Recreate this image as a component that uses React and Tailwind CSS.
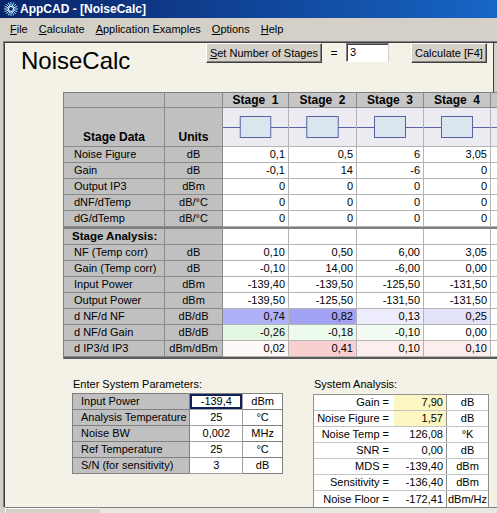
import React from "react";

const WC = ["w-[101px]", "w-[58px]", "w-[66px]", "w-[68px]", "w-[67px]", "w-[67px]", "w-[60px]"];

function StageIcon() {
  return (
    <svg width="100%" height="100%" viewBox="0 0 66 38" preserveAspectRatio="none">
      <line x1="0" y1="19.5" x2="66" y2="19.5" stroke="#5a62a4" strokeWidth="1" />
      <rect x="17.5" y="8.5" width="31" height="21" fill="#dae6ee" stroke="#5a62a4" strokeWidth="1" />
    </svg>
  );
}

function AppIcon() {
  const rays = [0, 22.5, 45, 67.5, 90, 112.5, 135, 157.5];
  return (
    <svg width="16" height="16" viewBox="0 0 16 16">
      {rays.map((a) => {
        const r = (a * Math.PI) / 180;
        const dx = Math.cos(r) * 7;
        const dy = Math.sin(r) * 7;
        return (
          <line key={a} x1={8 - dx} y1={8 - dy} x2={8 + dx} y2={8 + dy} stroke="#9fe4ff" strokeWidth="1" />
        );
      })}
      <circle cx="8" cy="8" r="2.5" fill="#0a246a" stroke="#ffffff" strokeWidth="1" />
    </svg>
  );
}

function Btn({ className, children }) {
  return (
    <div
      className={`${className} h-[20px] flex items-center justify-center bg-[#d4d0c8] border border-t-white border-l-white border-r-[#404040] border-b-[#404040] shadow-[inset_-1px_-1px_0_#808080] text-[11px] text-black`}
    >
      {children}
    </div>
  );
}

const stageData = [
  ["Noise Figure", "dB", ["0,1", "0,5", "6", "3,05"]],
  ["Gain", "dB", ["-0,1", "14", "-6", "0"]],
  ["Output IP3", "dBm", ["0", "0", "0", "0"]],
  ["dNF/dTemp", "dB/°C", ["0", "0", "0", "0"]],
  ["dG/dTemp", "dB/°C", ["0", "0", "0", "0"]],
];

const analysis = [
  ["NF (Temp corr)", "dB", ["0,10", "0,50", "6,00", "3,05"], null],
  ["Gain (Temp corr)", "dB", ["-0,10", "14,00", "-6,00", "0,00"], null],
  ["Input Power", "dBm", ["-139,40", "-139,50", "-125,50", "-131,50"], null],
  ["Output Power", "dBm", ["-139,50", "-125,50", "-131,50", "-131,50"], null],
  ["d NF/d NF", "dB/dB", ["0,74", "0,82", "0,13", "0,25"], ["bg-[#b0b0f6]", "bg-[#a2a2f2]", "bg-[#ececfc]", "bg-[#e2e2f9]"]],
  ["d NF/d Gain", "dB/dB", ["-0,26", "-0,18", "-0,10", "0,00"], ["bg-[#e4f7e4]", "bg-[#ecfaec]", "bg-[#f3fcf3]", "bg-white"]],
  ["d IP3/d IP3", "dBm/dBm", ["0,02", "0,41", "0,10", "0,10"], ["bg-[#fef8f8]", "bg-[#f8d0d0]", "bg-[#fdeeee]", "bg-[#fdeeee]"]],
];

function LabelCell({ children, bold }) {
  return (
    <div
      className={`${WC[0]} h-full shrink-0 bg-[#c0c0c0] border-r border-b border-[#8a8a8a] flex items-center ${
        bold ? "pl-[8px] font-bold text-[11.5px]" : "pl-[10px] text-[11px]"
      } whitespace-nowrap`}
    >
      {children}
    </div>
  );
}

function UnitCell({ children }) {
  return (
    <div className={`${WC[1]} h-full shrink-0 bg-[#c0c0c0] border-r border-b border-[#8a8a8a] flex items-center justify-center text-[11px]`}>
      {children}
    </div>
  );
}

function ValCell({ i, children, bg }) {
  return (
    <div
      className={`${WC[i + 2]} h-full shrink-0 ${bg || "bg-white"} border-r border-b border-[#b4b4b4] flex items-center justify-end pr-[3px] text-[11px]`}
    >
      {children}
    </div>
  );
}

function MainTable() {
  return (
    <div className="ml-[58px] mt-0 w-[600px] border-t border-l border-[#808080] leading-[15px]">
      {/* header */}
      <div className="flex h-[15px]">
        <div className={`${WC[0]} h-full shrink-0 bg-[#c0c0c0] border-r border-b border-[#8a8a8a]`} />
        <div className={`${WC[1]} h-full shrink-0 bg-[#c0c0c0] border-r border-b border-[#8a8a8a]`} />
        {[1, 2, 3, 4].map((n, i) => (
          <div
            key={n}
            className={`${WC[i + 2]} h-full shrink-0 bg-[#c6c6c6] border-r border-b border-[#8a8a8a] flex items-center justify-center font-bold text-[12px] whitespace-pre`}
          >
            {"Stage  " + n}
          </div>
        ))}
        <div className={`${WC[6]} h-full shrink-0 bg-[#c6c6c6] border-r border-b border-[#8a8a8a]`} />
      </div>
      {/* icons */}
      <div className="flex h-[39px]">
        <div className={`${WC[0]} h-full shrink-0 bg-[#c0c0c0] border-r border-b border-[#8a8a8a] flex items-end justify-center pb-[1px] font-bold text-[12px]`}>
          Stage Data
        </div>
        <div className={`${WC[1]} h-full shrink-0 bg-[#c0c0c0] border-r border-b border-[#8a8a8a] flex items-end justify-center pb-[1px] font-bold text-[12px]`}>
          Units
        </div>
        {[0, 1, 2, 3, 4].map((i) => (
          <div key={i} className={`${WC[i + 2]} h-full shrink-0 bg-[#ecebf1] border-r border-b border-[#b4b4b4]`}>
            <StageIcon />
          </div>
        ))}
      </div>
      {stageData.map(([l, u, v]) => (
        <div key={l} className="flex h-[16px]">
          <LabelCell>{l}</LabelCell>
          <UnitCell>{u}</UnitCell>
          {v.map((x, i) => (
            <ValCell key={i} i={i}>
              {x}
            </ValCell>
          ))}
          <ValCell i={4}></ValCell>
        </div>
      ))}
      <div className="h-[2px] bg-[#808080]" />
      <div className="flex h-[16px]">
        <LabelCell bold>Stage Analysis:</LabelCell>
        <UnitCell></UnitCell>
        {[0, 1, 2, 3, 4].map((i) => (
          <ValCell key={i} i={i}></ValCell>
        ))}
      </div>
      {analysis.map(([l, u, v, c]) => (
        <div key={l} className="flex h-[16px]">
          <LabelCell>{l}</LabelCell>
          <UnitCell>{u}</UnitCell>
          {v.map((x, i) => (
            <ValCell key={i} i={i} bg={c ? c[i] : null}>
              {x}
            </ValCell>
          ))}
          <ValCell i={4}></ValCell>
        </div>
      ))}
      <div className="h-[2px] bg-[#5a5a5a]" />
    </div>
  );
}

const params = [
  ["Input Power", "-139,4", "dBm"],
  ["Analysis Temperature", "25", "°C"],
  ["Noise BW", "0,002", "MHz"],
  ["Ref Temperature", "25", "°C"],
  ["S/N (for sensitivity)", "3", "dB"],
];

const sysAnalysis = [
  ["Gain =", "7,90", "dB", true],
  ["Noise Figure =", "1,57", "dB", true],
  ["Noise Temp =", "126,08", "°K", false],
  ["SNR =", "0,00", "dB", false],
  ["MDS =", "-139,40", "dBm", false],
  ["Sensitivity =", "-136,40", "dBm", false],
  ["Noise Floor =", "-172,41", "dBm/Hz", false],
];

function ParamsPanel() {
  return (
    <div className="ml-[67px] w-[211px] shrink-0">
      <div className="h-[14px] leading-[14px] text-[11px] pl-[1px]">Enter System Parameters:</div>
      <div className="mt-[2px] border-t border-l border-[#808080] leading-[15px]">
        {params.map(([l, v, u], r) => (
          <div key={l} className="flex h-[16px]">
            <div className="w-[118px] h-full bg-[#c0c0c0] border-r border-b border-[#808080] pl-[8px] flex items-center text-[11px] whitespace-nowrap">
              {l}
            </div>
            <div
              className={`w-[53px] h-full bg-white border-r border-b border-[#a0a0a0] flex items-center justify-center text-[11px] ${
                r === 0 ? "shadow-[inset_0_0_0_2px_#12205a]" : ""
              }`}
            >
              {v}
            </div>
            <div className="w-[40px] h-full bg-white border-r border-b border-[#808080] flex items-center justify-center text-[11px]">
              {u}
            </div>
          </div>
        ))}
      </div>
    </div>
  );
}

function AnalysisPanel() {
  return (
    <div className="ml-[30px] w-[176px] shrink-0">
      <div className="h-[14px] leading-[14px] text-[11px] pl-[1px]">System Analysis:</div>
      <div className="mt-[3px] border border-[#909090] leading-[15px]">
        {sysAnalysis.map(([l, v, u, y], r) => (
          <div key={l} className={`flex h-[16px] ${r < sysAnalysis.length - 1 ? "border-b border-[#c4c4c4]" : ""}`}>
            <div className="w-[80px] h-full bg-white pr-[5px] flex items-center justify-end text-[11px] whitespace-nowrap">{l}</div>
            <div
              className={`w-[53px] h-full ${y ? "bg-[#fcf6c2]" : "bg-white"} border-r border-[#909090] pr-[3px] flex items-center justify-end text-[11px]`}
            >
              {v}
            </div>
            <div className="w-[41px] h-full bg-white flex items-center justify-center text-[11px] whitespace-nowrap">{u}</div>
          </div>
        ))}
      </div>
    </div>
  );
}

export default function App() {
  const menu = [
    ["F", "ile"],
    ["C", "alculate"],
    ["A", "pplication Examples"],
    ["O", "ptions"],
    ["H", "elp"],
  ];
  return (
    <div className="w-[497px] h-[513px] overflow-hidden bg-[#d4d0c8] flex flex-col font-['Liberation_Sans',Arial,sans-serif] text-black">
      {/* title bar */}
      <div className="h-[18px] shrink-0 flex items-center bg-gradient-to-r from-[#0a246a] to-[#1766c6] pl-[3px]">
        <AppIcon />
        <span className="ml-[1px] text-white font-bold text-[12px] leading-[16px] whitespace-nowrap">AppCAD - [NoiseCalc]</span>
      </div>
      {/* menu */}
      <div className="h-[22px] shrink-0 flex items-center pl-[5px] pt-[1px] text-[11px]">
        {menu.map(([a, b]) => (
          <div key={a + b} className="px-[5px] mr-[1px] whitespace-nowrap">
            <span className="underline underline-offset-[1px]">{a}</span>
            {b}
          </div>
        ))}
      </div>
      {/* client */}
      <div className="mt-[1px] ml-[3px] border-t border-l border-[#808080] shrink-0">
        <div className="border-t border-l border-[#404040] h-[465px] bg-[#f4f2e7] overflow-hidden flex flex-col">
          {/* top row */}
          <div className="flex h-[49px] shrink-0">
            <div className="w-[201px] shrink-0 pl-[16px] pt-[4px] text-[24px] leading-[28px]">NoiseCalc</div>
            <Btn className="w-[116px] shrink-0">
              <span>
                <span className="underline underline-offset-[1px]">S</span>et Number of Stages
              </span>
            </Btn>
            <div className="w-[24px] shrink-0 h-[20px] flex items-center justify-center text-[12px]">=</div>
            <div className="w-[43px] h-[19px] shrink-0 bg-white border border-t-[#808080] border-l-[#808080] border-b-white border-r-[#d4d0c8] shadow-[inset_1px_1px_0_#404040] pl-[3px] flex items-center text-[11px]">
              3
            </div>
            <div className="w-[22px] shrink-0" />
            <Btn className="w-[76px] shrink-0">Calculate [F4]</Btn>
            <div className="ml-[6px] w-[10px] shrink-0 border-l border-[#404040] bg-[#d4d0c8]" />
          </div>
          <MainTable />
          <div className="flex mt-[18px]">
            <ParamsPanel />
            <AnalysisPanel />
          </div>
        </div>
      </div>
      {/* horizontal scrollbar */}
      <div className="ml-[5px] h-[17px] shrink-0 flex border-t border-[#808080] bg-[#e9e7e1]">
        <div className="w-[95px] h-full bg-[#d4d0c8] border-l border-t border-white" />
      </div>
    </div>
  );
}
